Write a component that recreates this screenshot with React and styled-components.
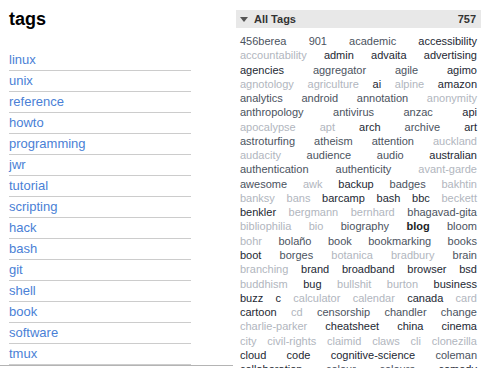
import React from 'react'
import styled, { createGlobalStyle } from 'styled-components'

const GlobalStyle = createGlobalStyle`
  body {
    margin: 0;
    background: #fff;
    font-family: "Liberation Sans", Arial, sans-serif;
  }
`

const Page = styled.div`
  display: flex;
  align-items: flex-start;
  width: 500px;
  height: 368px;
  overflow: hidden;
`

const Sidebar = styled.div`
  width: 182px;
  padding: 9px 42px 0 9px;
  border-bottom: 1px solid #b4b4b4;
`

const Heading = styled.h1`
  margin: 0 0 20px;
  font-size: 18px;
  line-height: 21px;
  font-weight: bold;
  color: #000;
`

const LinkList = styled.ul`
  list-style: none;
  margin: 0;
  padding: 0;
`

const LinkItem = styled.li`
  height: 20px;
  line-height: 20px;
  border-bottom: 1px solid #cccccc;
  font-size: 13px;
`

const Link = styled.a`
  color: #4a7fd6;
  text-decoration: none;
`

const Panel = styled.div`
  width: 245px;
  margin: 10px 0 0 3px;
`

const PanelHeader = styled.div`
  display: flex;
  align-items: center;
  height: 18px;
  padding: 0 5px 0 4px;
  background: #e8e8e8;
  font-size: 11px;
  font-weight: bold;
  color: #333;
`

const Caret = styled.span`
  width: 0;
  height: 0;
  margin: 1px 6px 0 0;
  border-left: 4px solid transparent;
  border-right: 4px solid transparent;
  border-top: 5px solid #555;
`

const Count = styled.span`
  margin-left: auto;
`

const Cloud = styled.div`
  padding: 6px 4px 0;
  font-size: 11px;
`

const CloudRow = styled.div`
  display: flex;
  justify-content: space-between;
  height: 14.27px;
  line-height: 14.27px;
  white-space: nowrap;
`

const tagColors = ['#b1b6be', '#b1b6be', '#4b5360', '#232833', '#1c1f26']

const Tag = styled.a`
  color: ${p => tagColors[p.$level]};
  font-weight: ${p => (p.$level === 4 ? 'bold' : 'normal')};
  text-decoration: none;
`

const links = [
  'linux', 'unix', 'reference', 'howto', 'programming', 'jwr', 'tutorial', 'scripting',
  'hack', 'bash', 'git', 'shell', 'book', 'software', 'tmux',
]

const cloud = [
  '456berea:2 901:2 academic:2 accessibility:3',
  'accountability:0 admin:3 advaita:3 advertising:3',
  'agencies:3 aggregator:2 agile:2 agimo:3',
  'agnotology:0 agriculture:0 ai:3 alpine:0 amazon:3',
  'analytics:2 android:2 annotation:2 anonymity:0',
  'anthropology:2 antivirus:2 anzac:2 api:3',
  'apocalypse:0 apt:0 arch:3 archive:2 art:3',
  'astroturfing:2 atheism:2 attention:2 auckland:0',
  'audacity:0 audience:2 audio:2 australian:3',
  'authentication:2 authenticity:2 avant-garde:0',
  'awesome:2 awk:0 backup:3 badges:2 bakhtin:0',
  'banksy:0 bans:0 barcamp:3 bash:3 bbc:3 beckett:0',
  'benkler:3 bergmann:0 bernhard:0 bhagavad-gita:2',
  'bibliophilia:0 bio:0 biography:2 blog:4 bloom:2',
  'bohr:0 bolaño:2 book:2 bookmarking:2 books:2',
  'boot:3 borges:2 botanica:0 bradbury:0 brain:2',
  'branching:0 brand:3 broadband:3 browser:3 bsd:3',
  'buddhism:0 bug:3 bullshit:0 burton:0 business:3',
  'buzz:3 c:3 calculator:0 calendar:0 canada:3 card:0',
  'cartoon:3 cd:0 censorship:2 chandler:2 change:2',
  'charlie-parker:0 cheatsheet:3 china:3 cinema:3',
  'city:0 civil-rights:0 claimid:0 claws:0 cli:0 clonezilla:0',
  'cloud:3 code:3 cognitive-science:3 coleman:2',
  'collaboration:3 colour:2 colours:2 comedy:3',
].map(row => row.split(' ').map(t => {
  const [word, level] = t.split(':')
  return { word, level: Number(level) }
}))

const App = () => (
  <>
    <GlobalStyle />
    <Page>
      <Sidebar>
        <Heading>tags</Heading>
        <LinkList>
          {links.map(l => (
            <LinkItem key={l}>
              <Link href="#">{l}</Link>
            </LinkItem>
          ))}
        </LinkList>
      </Sidebar>
      <Panel>
        <PanelHeader>
          <Caret />
          All Tags
          <Count>757</Count>
        </PanelHeader>
        <Cloud>
          {cloud.map((row, i) => (
            <CloudRow key={i}>
              {row.map(t => (
                <Tag key={t.word} href="#" $level={t.level}>{t.word}</Tag>
              ))}
            </CloudRow>
          ))}
        </Cloud>
      </Panel>
    </Page>
  </>
)

export default App
